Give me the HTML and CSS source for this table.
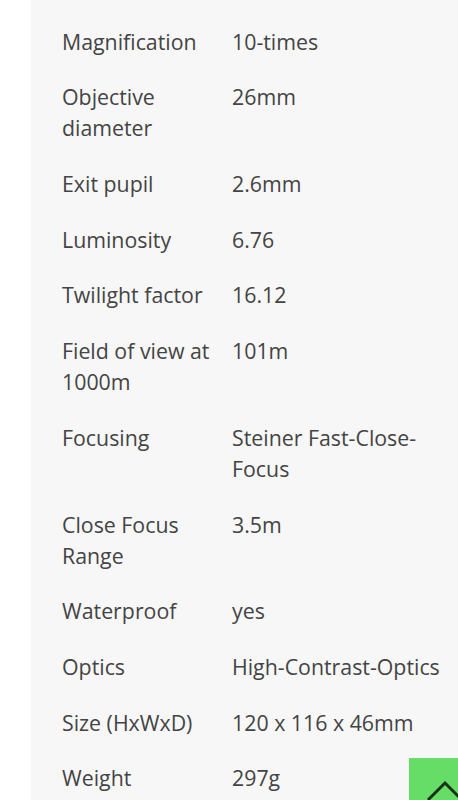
FILE: index.html
```html
<!DOCTYPE html>
<html lang="en">
<head>
    <meta charset="UTF-8">
    <title>Technical data</title>
    <link rel="stylesheet" href="styles.css">
</head>
<body>

    <div class="specs-panel">
        <table class="specs">
            <tr><td class="label">Magnification</td><td>10-times</td></tr>
            <tr><td class="label">Objective diameter</td><td>26mm</td></tr>
            <tr><td class="label">Exit pupil</td><td>2.6mm</td></tr>
            <tr><td class="label">Luminosity</td><td>6.76</td></tr>
            <tr><td class="label">Twilight factor</td><td>16.12</td></tr>
            <tr><td class="label">Field of view at 1000m</td><td>101m</td></tr>
            <tr><td class="label">Focusing</td><td>Steiner Fast-Close-Focus</td></tr>
            <tr><td class="label">Close Focus Range</td><td>3.5m</td></tr>
            <tr><td class="label">Waterproof</td><td>yes</td></tr>
            <tr><td class="label">Optics</td><td>High-Contrast-Optics</td></tr>
            <tr><td class="label">Size (HxWxD)</td><td>120 x 116 x 46mm</td></tr>
            <tr><td class="label">Weight</td><td>297g</td></tr>
        </table>
    </div>

    <!-- back to top -->
    <a href="#" class="to-top">
        <svg width="72" height="72" viewBox="0 0 72 72">
            <polyline points="19,42 36,25 53,42" fill="none" stroke="#173317" stroke-width="3"/>
        </svg>
    </a>

</body>
</html>
```

FILE: styles.css
```css
body {
    margin: 0;
    background-color: #fff;
    font-family: "Open Sans", Arial, sans-serif;
    color: #444;
}

.specs-panel {
    margin-left: 31px;
    padding: 13.4px 12px 0 31px;
    background-color: #f7f7f7;
    min-height: 800px;
}

.specs {
    width: 100%;
    border-collapse: collapse;
    font-size: 21.33px;
    line-height: 31px;
}

.specs td {
    padding: 12.35px 0;
    vertical-align: top;
}

.specs td.label {
    width: 170px;
    padding-right: 8px;
    box-sizing: border-box;
}

.to-top {
    position: fixed;
    left: 409px;
    top: 758px;
    width: 72px;
    height: 72px;
    background-color: #66dd66;
    display: block;
}

.to-top svg {
    display: block;
}
```
